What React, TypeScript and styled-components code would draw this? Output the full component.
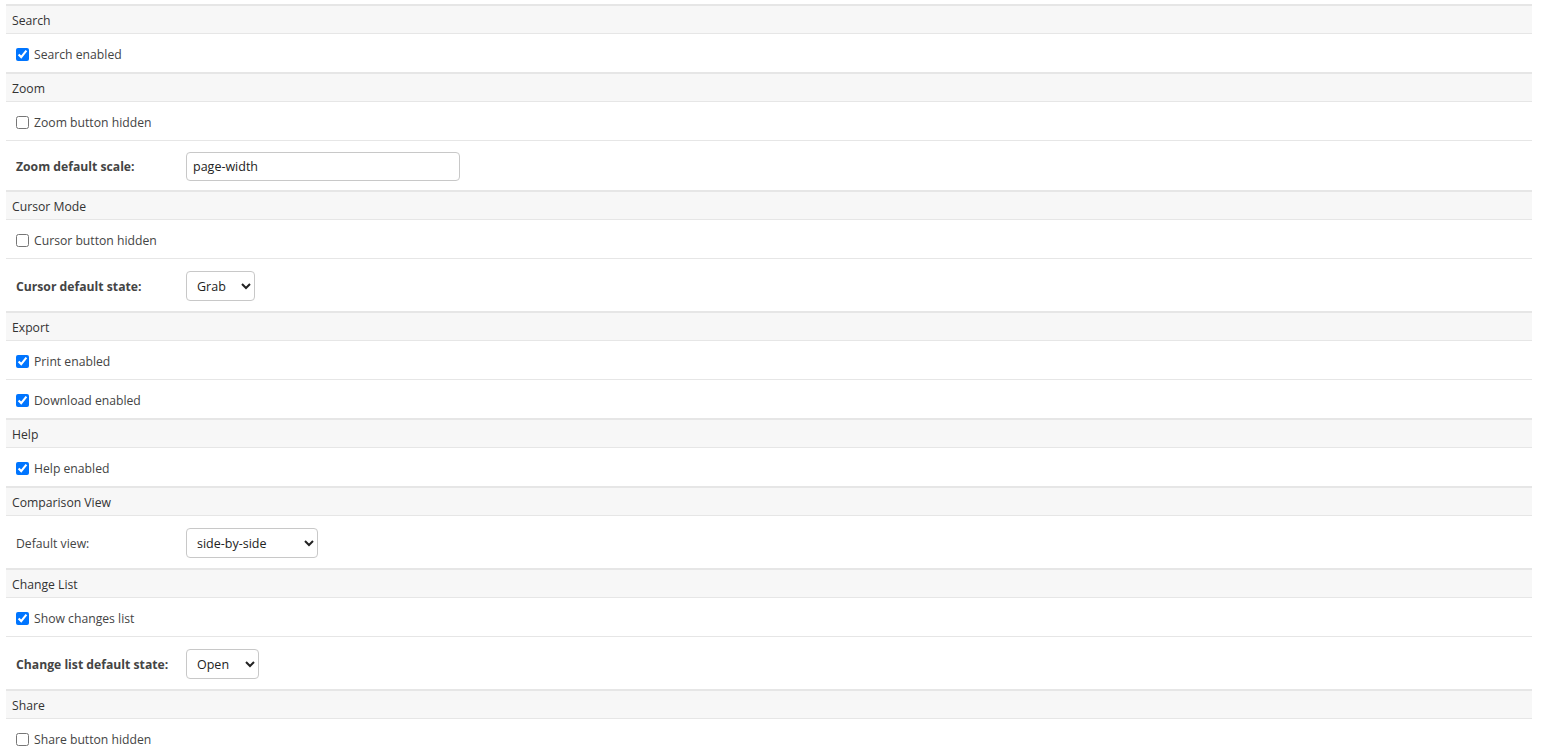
import { FC, ReactNode } from 'react'
import styled, { createGlobalStyle } from 'styled-components'

const GlobalStyle = createGlobalStyle`
  body {
    margin: 0;
    background: #fff;
    font-family: 'Open Sans', 'Noto Sans', Arial, sans-serif;
    font-size: 12.2px;
    color: #333;
  }
`

const Page = styled.div`
  padding: 4px 0 0 6px;
  width: 1526px;
`

const SectionHeader = styled.div`
  height: 26px;
  padding: 1px 0 0 6px;
  display: flex;
  align-items: center;
  background: #f7f7f7;
  border-top: 2px solid #e6e6e6;
  border-bottom: 1px solid #e6e6e6;
  color: #333;
`

// height is the content height; a bit of top padding pushes the text down
const Row = styled.div<{ height?: number }>`
  display: flex;
  align-items: center;
  height: ${({ height }) => (height ?? 38) - 2}px;
  padding: 2px 0 0 10px;
  & + & {
    border-top: 1px solid #e6e6e6;
  }
`

const CheckLabel = styled.label`
  display: flex;
  align-items: center;
  gap: 2px;
  color: #444;
  cursor: pointer;

  input {
    margin: 0 3px 0 0;
    width: 13px;
    height: 13px;
  }
`

const FieldLabel = styled.label<{ bold?: boolean }>`
  width: 170px;
  font-weight: ${({ bold }) => (bold ? 700 : 400)};
  color: #444;
`

const TextInput = styled.input`
  box-sizing: border-box;
  width: 274px;
  height: 29px;
  padding: 0 6px;
  border: 1px solid #c8c8c8;
  border-radius: 4px;
  font-family: inherit;
  font-size: 12.5px;
  color: #222;
`

const Select = styled.select<{ width: number }>`
  box-sizing: border-box;
  width: ${({ width }) => width}px;
  height: 30px;
  padding: 0 4px 0 6px;
  border: 1px solid #c8c8c8;
  border-radius: 4px;
  background: #fff;
  font-family: inherit;
  font-size: 12.5px;
  color: #222;
`

const Section: FC<{ title: string; children: ReactNode }> = ({ title, children }) => (
  <section>
    <SectionHeader>{title}</SectionHeader>
    {children}
  </section>
)

const Check: FC<{ label: string; checked?: boolean }> = ({ label, checked }) => (
  <Row>
    <CheckLabel>
      <input type="checkbox" defaultChecked={checked} />
      {label}
    </CheckLabel>
  </Row>
)

const App: FC = () => (
  <>
    <GlobalStyle />
    <Page>
      <Section title="Search">
        <Check label="Search enabled" checked />
      </Section>
      <Section title="Zoom">
        <Check label="Zoom button hidden" />
        <Row height={49}>
          <FieldLabel bold>Zoom default scale:</FieldLabel>
          <TextInput defaultValue="page-width" />
        </Row>
      </Section>
      <Section title="Cursor Mode">
        <Check label="Cursor button hidden" />
        <Row height={52}>
          <FieldLabel bold>Cursor default state:</FieldLabel>
          <Select width={69} defaultValue="grab">
            <option value="grab">Grab</option>
            <option value="select">Select</option>
          </Select>
        </Row>
      </Section>
      <Section title="Export">
        <Check label="Print enabled" checked />
        <Check label="Download enabled" checked />
      </Section>
      <Section title="Help">
        <Check label="Help enabled" checked />
      </Section>
      <Section title="Comparison View">
        <Row height={52}>
          <FieldLabel>Default view:</FieldLabel>
          <Select width={132} defaultValue="side-by-side">
            <option value="side-by-side">side-by-side</option>
            <option value="overlay">overlay</option>
          </Select>
        </Row>
      </Section>
      <Section title="Change List">
        <Check label="Show changes list" checked />
        <Row height={52}>
          <FieldLabel bold>Change list default state:</FieldLabel>
          <Select width={73} defaultValue="open">
            <option value="open">Open</option>
            <option value="closed">Closed</option>
          </Select>
        </Row>
      </Section>
      <Section title="Share">
        <Check label="Share button hidden" />
      </Section>
    </Page>
  </>
)

export default App
